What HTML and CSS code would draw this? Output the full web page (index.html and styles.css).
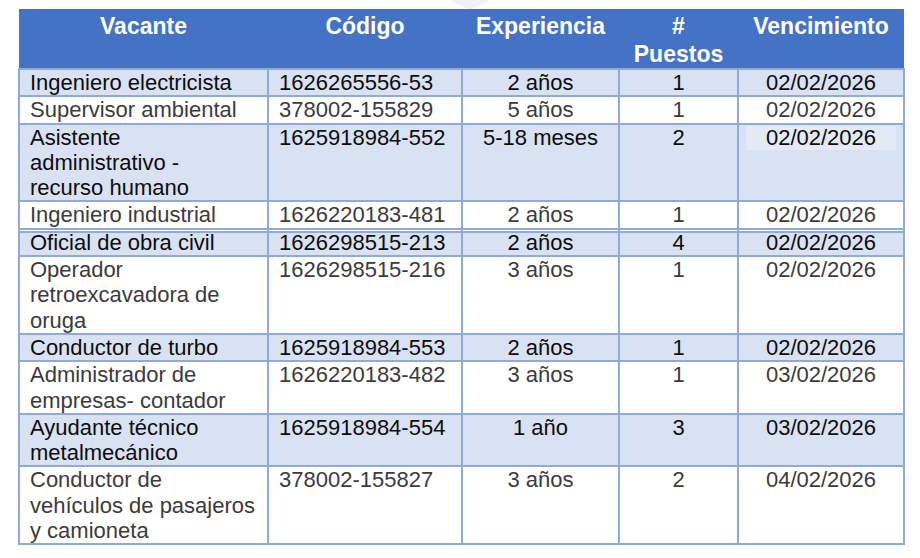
FILE: index.html
```html
<!DOCTYPE html>
<html lang="es">
<head>
<meta charset="utf-8">
<title>Vacantes</title>
<link rel="stylesheet" href="styles.css">
</head>
<body>
<div class="page">
  <svg class="wm-top" width="40" height="10" viewBox="0 0 40 10"><polygon points="0,0 40,0 20,10" fill="#eef1f8"/></svg>
  <table class="jobs">
    <colgroup>
      <col class="c1"><col class="c2"><col class="c3"><col class="c4"><col class="c5">
    </colgroup>
    <thead>
      <tr>
        <th>Vacante</th>
        <th>Código</th>
        <th>Experiencia</th>
        <th>#<br>Puestos</th>
        <th>Vencimiento</th>
      </tr>
    </thead>
    <tbody>
      <tr class="alt"><td>Ingeniero electricista</td><td>1626265556-53</td><td class="ctr">2 años</td><td class="ctr">1</td><td class="ctr">02/02/2026</td></tr>
      <tr><td>Supervisor ambiental</td><td>378002-155829</td><td class="ctr">5 años</td><td class="ctr">1</td><td class="ctr">02/02/2026</td></tr>
      <tr class="alt"><td>Asistente administrativo - recurso humano</td><td>1625918984-552</td><td class="ctr">5-18 meses</td><td class="ctr">2</td><td class="ctr"><span class="hl">02/02/2026</span></td></tr>
      <tr><td>Ingeniero industrial</td><td>1626220183-481</td><td class="ctr">2 años</td><td class="ctr">1</td><td class="ctr">02/02/2026</td></tr>
      <tr class="alt dbl"><td>Oficial de obra civil</td><td>1626298515-213</td><td class="ctr">2 años</td><td class="ctr">4</td><td class="ctr">02/02/2026</td></tr>
      <tr><td>Operador retroexcavadora de oruga</td><td>1626298515-216</td><td class="ctr">3 años</td><td class="ctr">1</td><td class="ctr">02/02/2026</td></tr>
      <tr class="alt"><td>Conductor de turbo</td><td>1625918984-553</td><td class="ctr">2 años</td><td class="ctr">1</td><td class="ctr">02/02/2026</td></tr>
      <tr><td>Administrador de empresas- contador</td><td>1626220183-482</td><td class="ctr">3 años</td><td class="ctr">1</td><td class="ctr">03/02/2026</td></tr>
      <tr class="alt"><td>Ayudante técnico metalmecánico</td><td>1625918984-554</td><td class="ctr">1 año</td><td class="ctr">3</td><td class="ctr">03/02/2026</td></tr>
      <tr><td>Conductor de vehículos de pasajeros y camioneta</td><td>378002-155827</td><td class="ctr">3 años</td><td class="ctr">2</td><td class="ctr">04/02/2026</td></tr>
    </tbody>
  </table>
</div>
</body>
</html>
```
FILE: styles.css
```css
html, body {
  margin: 0;
  padding: 0;
  background: #ffffff;
}
.page {
  position: relative;
  padding: 9px 18px 0 18px;
  font-family: "Liberation Sans", Arial, sans-serif;
}
.wm-top {
  position: absolute;
  left: 450px;
  top: 0;
}
.jobs {
  position: relative;
  border-collapse: collapse;
  table-layout: fixed;
  width: 885px;
}
.c1 { width: 249px; }
.c2 { width: 194px; }
.c3 { width: 157px; }
.c4 { width: 119px; }
.c5 { width: 166px; }
.jobs th {
  background: #4472c4;
  color: #ffffff;
  font-weight: bold;
  font-size: 23px;
  line-height: 28px;
  text-align: center;
  vertical-align: top;
  padding: 3px 4px 0;
  height: 56px;
  border: none;
}
.jobs td {
  border: 2px solid #8eaadb;
  font-size: 22px;
  line-height: 25.3px;
  color: #3b3b3b;
  vertical-align: top;
  padding: 0 10px;
  text-align: left;
  background: #ffffff;
}
.jobs tr.alt td {
  background: #d9e2f3;
  color: #0d0d0d;
}
.jobs td.ctr {
  text-align: center;
}
.jobs tr.dbl td {
  box-shadow: inset 0 1px 0 #ffffff, inset 0 3px 0 #8eaadb;
}
.hl {
  display: block;
  margin: 1px -3px 0;
  background: #e3eaf6;
  line-height: 24px;
}
```
